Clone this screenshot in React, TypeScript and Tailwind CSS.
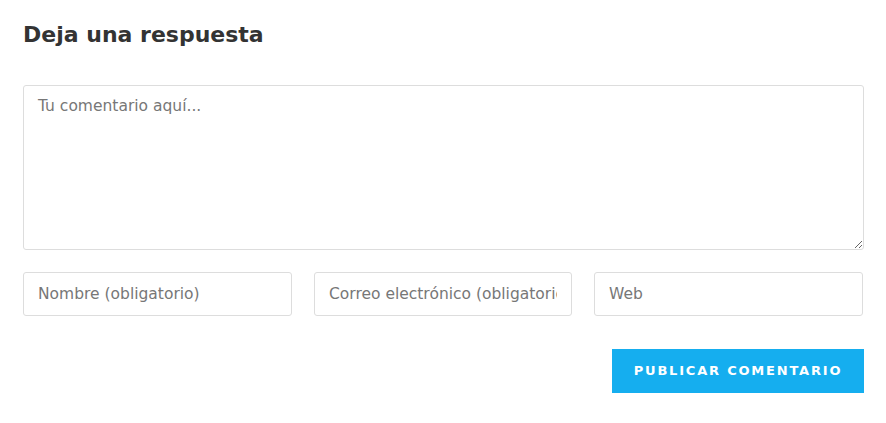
import React from "react";

const font = { fontFamily: '"DejaVu Sans", Verdana, sans-serif' };

export default function App() {
  return (
    <div className="w-[886px] h-[423px] bg-white" style={font}>
      <div className="pl-[23px] pr-[22px] pt-[21px]">
        <h3 className="text-[22px] leading-[28px] font-bold text-[#333]">Deja una respuesta</h3>
        <form className="mt-[36px] flex flex-col" onSubmit={(e) => e.preventDefault()}>
          <textarea
            placeholder="Tu comentario aquí..."
            className="w-[841px] h-[165px] border border-[#ddd] rounded-[3px] px-[14px] py-[9px] text-[15.5px] leading-[22px] text-[#333] placeholder:text-[#777] outline-none"
          />
          <div className="mt-[22px] grid grid-cols-[269px_258px_269px] gap-[22px]">
            <input
              placeholder="Nombre (obligatorio)"
              className="h-[44px] border border-[#ddd] rounded-[3px] px-[14px] text-[15.5px] text-[#333] placeholder:text-[#777] outline-none"
            />
            <input
              placeholder="Correo electrónico (obligatorio)"
              className="h-[44px] border border-[#ddd] rounded-[3px] px-[14px] text-[15.5px] text-[#333] placeholder:text-[#777] outline-none"
            />
            <input
              placeholder="Web"
              className="h-[44px] border border-[#ddd] rounded-[3px] px-[14px] text-[15.5px] text-[#333] placeholder:text-[#777] outline-none"
            />
          </div>
          <div className="mt-[33px] flex justify-end">
            <button
              type="submit"
              className="w-[252px] h-[44px] bg-[#15aeef] text-white text-[13px] font-bold tracking-[1.8px] uppercase"
            >
              Publicar comentario
            </button>
          </div>
        </form>
      </div>
    </div>
  );
}
